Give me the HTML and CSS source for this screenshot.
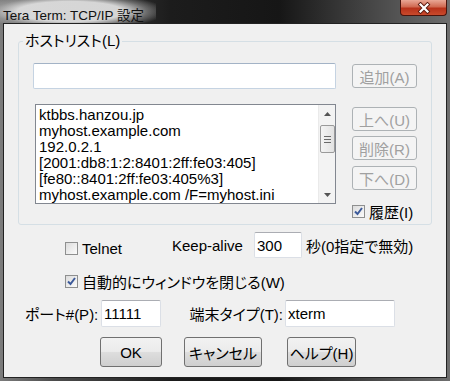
FILE: index.html
```html
<!DOCTYPE html>
<html lang="ja">
<head>
  <meta charset="UTF-8">
  <title>Tera Term: TCP/IP 設定</title>
  <link rel="stylesheet" href="styles.css">
</head>
<body>
  <div class="window">
    <div class="titlebar">
      <span class="title">Tera Term: TCP/IP 設定</span>
      <div class="close">
        <svg width="14" height="12" viewBox="0 0 14 12">
          <path d="M3.5 2.5 L10.5 9.5 M10.5 2.5 L3.5 9.5" stroke="#5a1a10" stroke-width="4" stroke-linecap="square"/>
          <path d="M3.5 2.5 L10.5 9.5 M10.5 2.5 L3.5 9.5" stroke="#ffffff" stroke-width="2.2" stroke-linecap="square"/>
        </svg>
      </div>
    </div>

    <div class="client">
      <fieldset class="group">
        <legend>ホストリスト(L)</legend>
        <div class="group-body">
          <div class="left-col">
            <input class="edit host-edit" type="text" value="">
            <div class="listbox">
              <div class="items">
                <div>ktbbs.hanzou.jp</div>
                <div>myhost.example.com</div>
                <div>192.0.2.1</div>
                <div>[2001:db8:1:2:8401:2ff:fe03:405]</div>
                <div>[fe80::8401:2ff:fe03:405%3]</div>
                <div>myhost.example.com /F=myhost.ini</div>
              </div>
              <div class="scrollbar">
                <div class="arrow">
                  <svg width="7" height="4" viewBox="0 0 7 4"><path d="M0 4 L3.5 0 L7 4 Z" fill="#555"/></svg>
                </div>
                <div class="track">
                  <div class="thumb"><span></span><span></span><span></span></div>
                </div>
                <div class="arrow">
                  <svg width="7" height="4" viewBox="0 0 7 4"><path d="M0 0 L7 0 L3.5 4 Z" fill="#555"/></svg>
                </div>
              </div>
            </div>
          </div>

          <div class="right-col">
            <button class="btn add" disabled>追加(A)</button>
            <button class="btn up" disabled>上へ(U)</button>
            <button class="btn del" disabled>削除(R)</button>
            <button class="btn down" disabled>下へ(D)</button>
            <label class="check history">
              <span class="cb on"><svg width="11" height="11" viewBox="0 0 11 11"><path d="M2 5.5 L4.5 8 L9 2" stroke="#3c5a9a" stroke-width="2" fill="none"/></svg></span>
              履歴(I)
            </label>
          </div>
        </div>
      </fieldset>

      <div class="row keep-row">
        <label class="check telnet">
          <span class="cb"></span>
          Telnet
        </label>
        <span class="keep-label">Keep-alive</span>
        <input class="edit keep-edit" type="text" value="300">
        <span class="keep-note">秒(0指定で無効)</span>
      </div>

      <div class="row auto-row">
        <label class="check">
          <span class="cb on"><svg width="11" height="11" viewBox="0 0 11 11"><path d="M2 5.5 L4.5 8 L9 2" stroke="#3c5a9a" stroke-width="2" fill="none"/></svg></span>
          自動的にウィンドウを閉じる(W)
        </label>
      </div>

      <div class="row port-row">
        <span class="port-label">ポート#(P):</span>
        <input class="edit port-edit" type="text" value="11111">
        <span class="term-label">端末タイプ(T):</span>
        <input class="edit term-edit" type="text" value="xterm">
      </div>

      <div class="row buttons">
        <button class="btn push ok">OK</button>
        <button class="btn push cancel">キャンセル</button>
        <button class="btn push help">ヘルプ(H)</button>
      </div>
    </div>
  </div>
</body>
</html>
```

FILE: styles.css
```css
* {
  box-sizing: border-box;
}

html, body {
  margin: 0;
  padding: 0;
}

body {
  width: 450px;
  height: 381px;
  overflow: hidden;
  font-family: "Liberation Sans", "Noto Sans CJK JP", sans-serif;
  font-size: 15px;
  font-feature-settings: "palt";
  color: #000;
  background: #3a3a3a;
}

.window {
  width: 450px;
  height: 381px;
  display: flex;
  flex-direction: column;
  background: linear-gradient(to right, #7c7c7c 0%, #4c4c4c 12%, #1c1c1c 38%, #161616 62%, #4a4a4a 84%, #6e6e6e 100%);
}

/* title bar */
.titlebar {
  height: 23px;
  display: flex;
  justify-content: space-between;
  align-items: flex-start;
}

.title {
  height: 23px;
  padding: 4px 12px 0 3px;
  font-size: 13.5px;
  color: #111;
  background: radial-gradient(ellipse 62% 80% at 45% 50%, rgba(222,222,222,0.95) 55%, rgba(170,170,170,0.5) 80%, rgba(120,120,120,0) 100%);
}

.close {
  width: 47px;
  height: 16px;
  margin-right: 3px;
  display: flex;
  align-items: center;
  justify-content: center;
  border: 1px solid #4a140c;
  border-top: none;
  border-radius: 0 0 4px 4px;
  background: linear-gradient(to bottom, #e9a795 0%, #d06a52 45%, #b8321a 55%, #c94a2c 100%);
}

/* client area */
.client {
  flex: 1;
  margin: 0 3px 3px;
  border: 1px solid #222;
  background: #f0f0f0;
  display: flex;
  flex-direction: column;
}

.group {
  margin: 8px 14px 0;
  padding: 0 4px 4px;
  border: 1px solid #d5dfe5;
  border-radius: 3px;
  min-width: 0;
}

.group legend {
  padding: 0 2px;
  line-height: 18px;
}

.group-body {
  display: flex;
  gap: 16px;
  padding: 13px 10px 0;
}

.left-col {
  width: 303px;
  display: flex;
  flex-direction: column;
}

.right-col {
  width: 65px;
  display: flex;
  flex-direction: column;
}

/* text boxes */
.edit {
  height: 26px;
  padding: 0 2px;
  font-family: inherit;
  font-size: 15px;
  font-feature-settings: "palt";
  color: #000;
  background: #fff;
  border: 1px solid #dbdfe6;
  border-top-color: #abadb3;
  border-radius: 2px;
  outline: none;
}

.host-edit {
  width: 303px;
  border-color: #c5d3e2;
  border-top-color: #a3b3c6;
}

/* list box */
.listbox {
  margin: 15px 0 0 2px;
  height: 100px;
  display: flex;
  border: 1px solid #828790;
  background: #fff;
}

.items {
  flex: 1;
  padding: 2px 0 0 3px;
  line-height: 16px;
  white-space: nowrap;
  overflow: hidden;
}

.scrollbar {
  width: 17px;
  display: flex;
  flex-direction: column;
  background: #f3f3f3;
  border-left: 1px solid #eaeaea;
}

.arrow {
  height: 17px;
  display: flex;
  align-items: center;
  justify-content: center;
}

.track {
  flex: 1;
  padding-top: 3px;
}

.thumb {
  width: 15px;
  height: 28px;
  margin: 0 auto;
  display: flex;
  flex-direction: column;
  align-items: center;
  justify-content: center;
  gap: 2px;
  border: 1px solid #9a9a9a;
  border-radius: 2px;
  background: linear-gradient(to right, #f4f4f4, #e2e2e2);
}

.thumb span {
  width: 7px;
  height: 1px;
  background: #6a6a6a;
}

/* buttons */
.btn {
  height: 24px;
  padding: 0;
  font-family: inherit;
  font-size: 15px;
  font-feature-settings: "palt";
  border-radius: 3px;
}

.btn:disabled {
  color: #a0a0a0;
  background: #f4f4f4;
  border: 1px solid #adb2b5;
}

.add {
  margin-top: 1px;
}

.up {
  margin-top: 19px;
}

.del {
  margin-top: 5px;
}

.down {
  margin-top: 6px;
}

.push {
  height: 30px;
  color: #000;
  border: 1px solid #707070;
  background: linear-gradient(to bottom, #f2f2f2 0%, #ebebeb 48%, #dddddd 52%, #cfcfcf 100%);
}

/* check boxes */
.check {
  display: flex;
  align-items: center;
  gap: 4px;
  white-space: nowrap;
}

.cb {
  width: 13px;
  height: 13px;
  display: flex;
  align-items: center;
  justify-content: center;
  border: 1px solid #8e8f8f;
  background: linear-gradient(135deg, #dcdcdc, #fbfbfb);
}

.history {
  margin-top: 12px;
  height: 18px;
}

/* rows below the group */
.row {
  display: flex;
  align-items: center;
}

.keep-row {
  margin-top: 7px;
  padding-left: 61px;
}

.telnet {
  width: 107px;
  padding-top: 6px;
}

.keep-label {
  width: 82px;
}

.keep-edit {
  width: 48px;
}

.keep-note {
  margin-left: 4px;
}

.auto-row {
  margin-top: 13px;
  padding-left: 61px;
  height: 20px;
}

.port-row {
  margin-top: 9px;
  padding-left: 21px;
}

.port-label {
  width: 76px;
}

.port-edit {
  width: 60px;
  height: 27px;
}

.term-label {
  width: 124px;
  padding-right: 2px;
  text-align: right;
}

.term-edit {
  width: 110px;
  height: 27px;
}

.buttons {
  margin-top: 10px;
  padding-left: 96px;
}

.ok {
  width: 62px;
}

.cancel {
  width: 78px;
  margin-left: 22px;
}

.help {
  width: 69px;
  margin-left: 25px;
}
```
